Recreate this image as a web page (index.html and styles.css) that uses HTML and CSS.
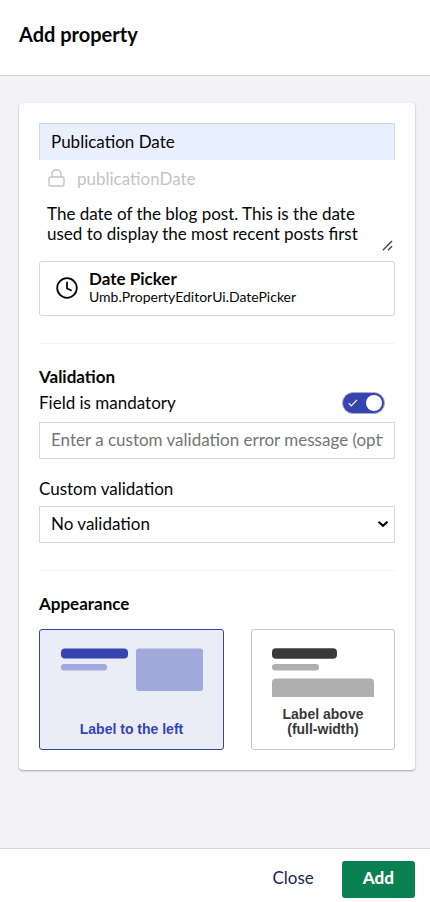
FILE: index.html
```html
<!DOCTYPE html>
<html lang="en">
<head>
<meta charset="utf-8">
<meta name="viewport" content="width=device-width, initial-scale=1">
<title>Add property</title>
<link rel="stylesheet" href="styles.css">
</head>
<body>
<form class="modal">
  <header class="modal-header">
    <h1 class="modal-title">Add property</h1>
  </header>

  <main class="modal-body">
    <div class="box">
      <section class="details">
        <input class="field field-name" type="text" value="Publication Date" aria-label="Name">
        <div class="alias">
          <svg class="alias-icon" viewBox="0 0 17 18" aria-hidden="true">
            <rect x="1" y="8" width="15" height="9" rx="1.6"/>
            <path d="M4 8V5a4.500 4.200 0 0 1 9 0v3"/>
          </svg>
          <input class="alias-input" type="text" value="publicationDate" aria-label="Alias" disabled>
        </div>
        <div class="description">
          <textarea class="description-input" rows="2" aria-label="Description">The date of the blog post. This is the date used to display the most recent posts first</textarea>
          <svg class="description-grip" viewBox="0 0 11 11" aria-hidden="true"><path d="M.8 10.200L10 1M6 10.200l4-4"/></svg>
        </div>
        <button class="editor" type="button">
          <svg class="editor-icon" viewBox="0 0 24 24" aria-hidden="true">
            <circle cx="12" cy="12" r="9.800"/>
            <path d="M12 6.500v6l4 1.800"/>
          </svg>
          <span class="editor-text">
            <span class="editor-name">Date Picker</span>
            <span class="editor-alias">Umb.PropertyEditorUi.DatePicker</span>
          </span>
        </button>
      </section>

      <hr class="divider">

      <section class="validation">
        <h2 class="section-title">Validation</h2>
        <div class="mandatory">
          <label for="mandatory">Field is mandatory</label>
          <span class="toggle">
            <input class="toggle-input" id="mandatory" type="checkbox" role="switch" checked>
            <svg class="toggle-check" viewBox="0 0 10 8" aria-hidden="true"><path d="M.8 4.200l2.400 2.600L9 .8"/></svg>
          </span>
        </div>
        <input class="field" type="text" placeholder="Enter a custom validation error message (optional)" aria-label="Validation message">
        <label class="custom-label" for="custom">Custom validation</label>
        <span class="select">
          <select class="field select-field" id="custom">
            <option>No validation</option>
          </select>
          <svg class="select-arrow" viewBox="0 0 12 8" aria-hidden="true"><path d="M1.500 1.800L6 5.800l4.500-4"/></svg>
        </span>
      </section>

      <hr class="divider">

      <section class="appearance">
        <h2 class="section-title">Appearance</h2>
        <div class="options">
          <button class="option option-left" type="button" aria-pressed="true">
            <svg class="option-art" width="143" height="43" viewBox="0 0 143 43" aria-hidden="true">
              <rect class="art-strong" x="1" y=".5" width="67" height="10" rx="4"/>
              <rect class="art-soft" x="1" y="16" width="46" height="6.500" rx="3"/>
              <rect class="art-soft" x="76" y=".5" width="67" height="42.500" rx="3"/>
            </svg>
            <span class="option-label">Label to the left</span>
          </button>
          <button class="option option-above" type="button" aria-pressed="false">
            <svg class="option-art" width="102" height="49" viewBox="0 0 102 49" aria-hidden="true">
              <rect class="art-strong" y=".3" width="65" height="10.500" rx="4"/>
              <rect class="art-soft" y="16" width="47" height="6.500" rx="3"/>
              <path class="art-soft" d="M0 49V34.500a4 4 0 0 1 4-4h94a4 4 0 0 1 4 4V49z"/>
            </svg>
            <span class="option-label">Label above<br>(full-width)</span>
          </button>
        </div>
      </section>
    </div>
  </main>

  <footer class="modal-footer">
    <button class="action" type="button">Close</button>
    <button class="action action-primary" type="submit">Add</button>
  </footer>
</form>
</body>
</html>
```
FILE: styles.css
```css
* {
  box-sizing: border-box;
}

body {
  margin: 0;
  background: #f3f3f5;
  color: #060606;
  font: 17px/20px Lato, sans-serif;
}

button,
input,
select,
textarea {
  margin: 0;
  color: inherit;
  font: inherit;
}

.modal {
  display: flex;
  flex-direction: column;
  min-height: 100vh;
}

.modal-header {
  padding: 22px 19px 29px;
  border-bottom: 1px solid #d8d7d9;
  background: #fff;
}

.modal-title {
  margin: 0;
  font-size: 20px;
  font-weight: 700;
  line-height: 24px;
}

.modal-body {
  flex: 1;
  padding: 27px 15px 27px 19px;
}

.box {
  padding: 20px;
  border-radius: 4px;
  background: #fff;
  box-shadow: 0 1px 2px rgba(0, 0, 0, 0.35);
}

.field {
  display: block;
  width: 100%;
  height: 37px;
  padding: 0 11px 2px;
  border: 1px solid #d8d7d9;
  border-radius: 0;
  background: #fff;
}

.field::placeholder {
  color: #757575;
}

.field-name {
  border-bottom: 0;
  background: #e8f0fe;
}

.alias {
  display: flex;
  align-items: center;
  gap: 12px;
  height: 38px;
  padding: 0 9px;
  color: #c4c4c4;
}

.alias-icon {
  flex: none;
  width: 17px;
  height: 18px;
  margin-bottom: 2px;
  fill: none;
  stroke: currentColor;
  stroke-width: 1.4;
}

.alias-input {
  flex: 1;
  min-width: 0;
  padding: 0;
  border: 0;
  background: none;
}

.description {
  position: relative;
}

.description-input {
  display: block;
  width: 100%;
  height: 55px;
  padding: 6px 8px;
  border: 0;
  background: none;
  overflow: hidden;
  resize: none;
}

.description-grip {
  position: absolute;
  right: 2px;
  bottom: 2px;
  width: 11px;
  height: 11px;
  fill: none;
  stroke: #444;
  stroke-width: 1.4;
  pointer-events: none;
}

.editor {
  display: flex;
  align-items: center;
  gap: 10px;
  width: 100%;
  height: 55px;
  margin-top: 8px;
  padding: 0 15px 2px;
  border: 1px solid #d8d7d9;
  border-radius: 3px;
  background: #fff;
  text-align: left;
}

.editor-icon {
  flex: none;
  width: 24px;
  height: 24px;
  fill: none;
  stroke: currentColor;
  stroke-width: 1.8;
  stroke-linecap: round;
  stroke-linejoin: round;
}

.editor-text {
  display: flex;
  flex-direction: column;
}

.editor-name {
  font-weight: 700;
  line-height: 18px;
}

.editor-alias {
  font-size: 14px;
  line-height: 18px;
}

.divider {
  height: 1px;
  margin: 27px 0 23px;
  border: 0;
  background: #f3f3f5;
}

.section-title {
  margin: 0;
  font-size: 17px;
  font-weight: 700;
  line-height: 20px;
}

.mandatory {
  display: flex;
  align-items: center;
  justify-content: space-between;
  height: 32px;
  margin-bottom: 3px;
  padding-right: 10px;
}

.toggle {
  position: relative;
  display: flex;
}

.toggle-input {
  display: flex;
  align-items: center;
  justify-content: flex-end;
  width: 43px;
  height: 22px;
  padding: 2px;
  border: 1px solid #a9abc6;
  border-radius: 11px;
  background: #3544b1;
  appearance: none;
}

.toggle-input::before {
  width: 16px;
  height: 16px;
  border-radius: 50%;
  background: #fff;
  content: "";
}

.toggle-check {
  position: absolute;
  top: 7px;
  left: 6px;
  width: 10px;
  height: 8px;
  fill: none;
  stroke: #fff;
  stroke-width: 1.2;
  pointer-events: none;
}

.custom-label {
  display: block;
  padding: 20px 0 7px;
}

.select {
  position: relative;
  display: block;
}

.select-field {
  appearance: none;
}

.select-arrow {
  position: absolute;
  top: 14px;
  right: 6px;
  width: 12px;
  height: 8px;
  fill: none;
  stroke: #000;
  stroke-width: 2.2;
  pointer-events: none;
}

.options {
  display: grid;
  grid-template-columns: 185fr 144fr;
  gap: 27px;
  margin-top: 15px;
}

.option {
  display: flex;
  flex-direction: column;
  align-items: center;
  justify-content: space-between;
  height: 121px;
  padding: 18px 20px 12px;
  border: 1px solid #c9c9cb;
  border-radius: 3px;
  background: #fff;
  color: #393939;
  font: 700 14px/15px "Liberation Sans", Arial, sans-serif;
}

.option-left {
  border-color: #3544b1;
  background: #eaecf7;
  color: #3544b1;
}

.art-strong {
  fill: currentColor;
}

.art-soft {
  fill: #afafaf;
}

.option-left .art-soft {
  fill: #a1a8da;
}

.modal-footer {
  display: flex;
  justify-content: flex-end;
  gap: 7px;
  padding: 12px 15px 4px;
  border-top: 1px solid #d8d7d9;
  background: #fff;
}

.action {
  height: 37px;
  padding: 0 21px 3px;
  border: 0;
  border-radius: 3px;
  background: none;
  color: #1b264f;
}

.action-primary {
  background: #0b8152;
  color: #fff;
  font-weight: 900;
}
```
